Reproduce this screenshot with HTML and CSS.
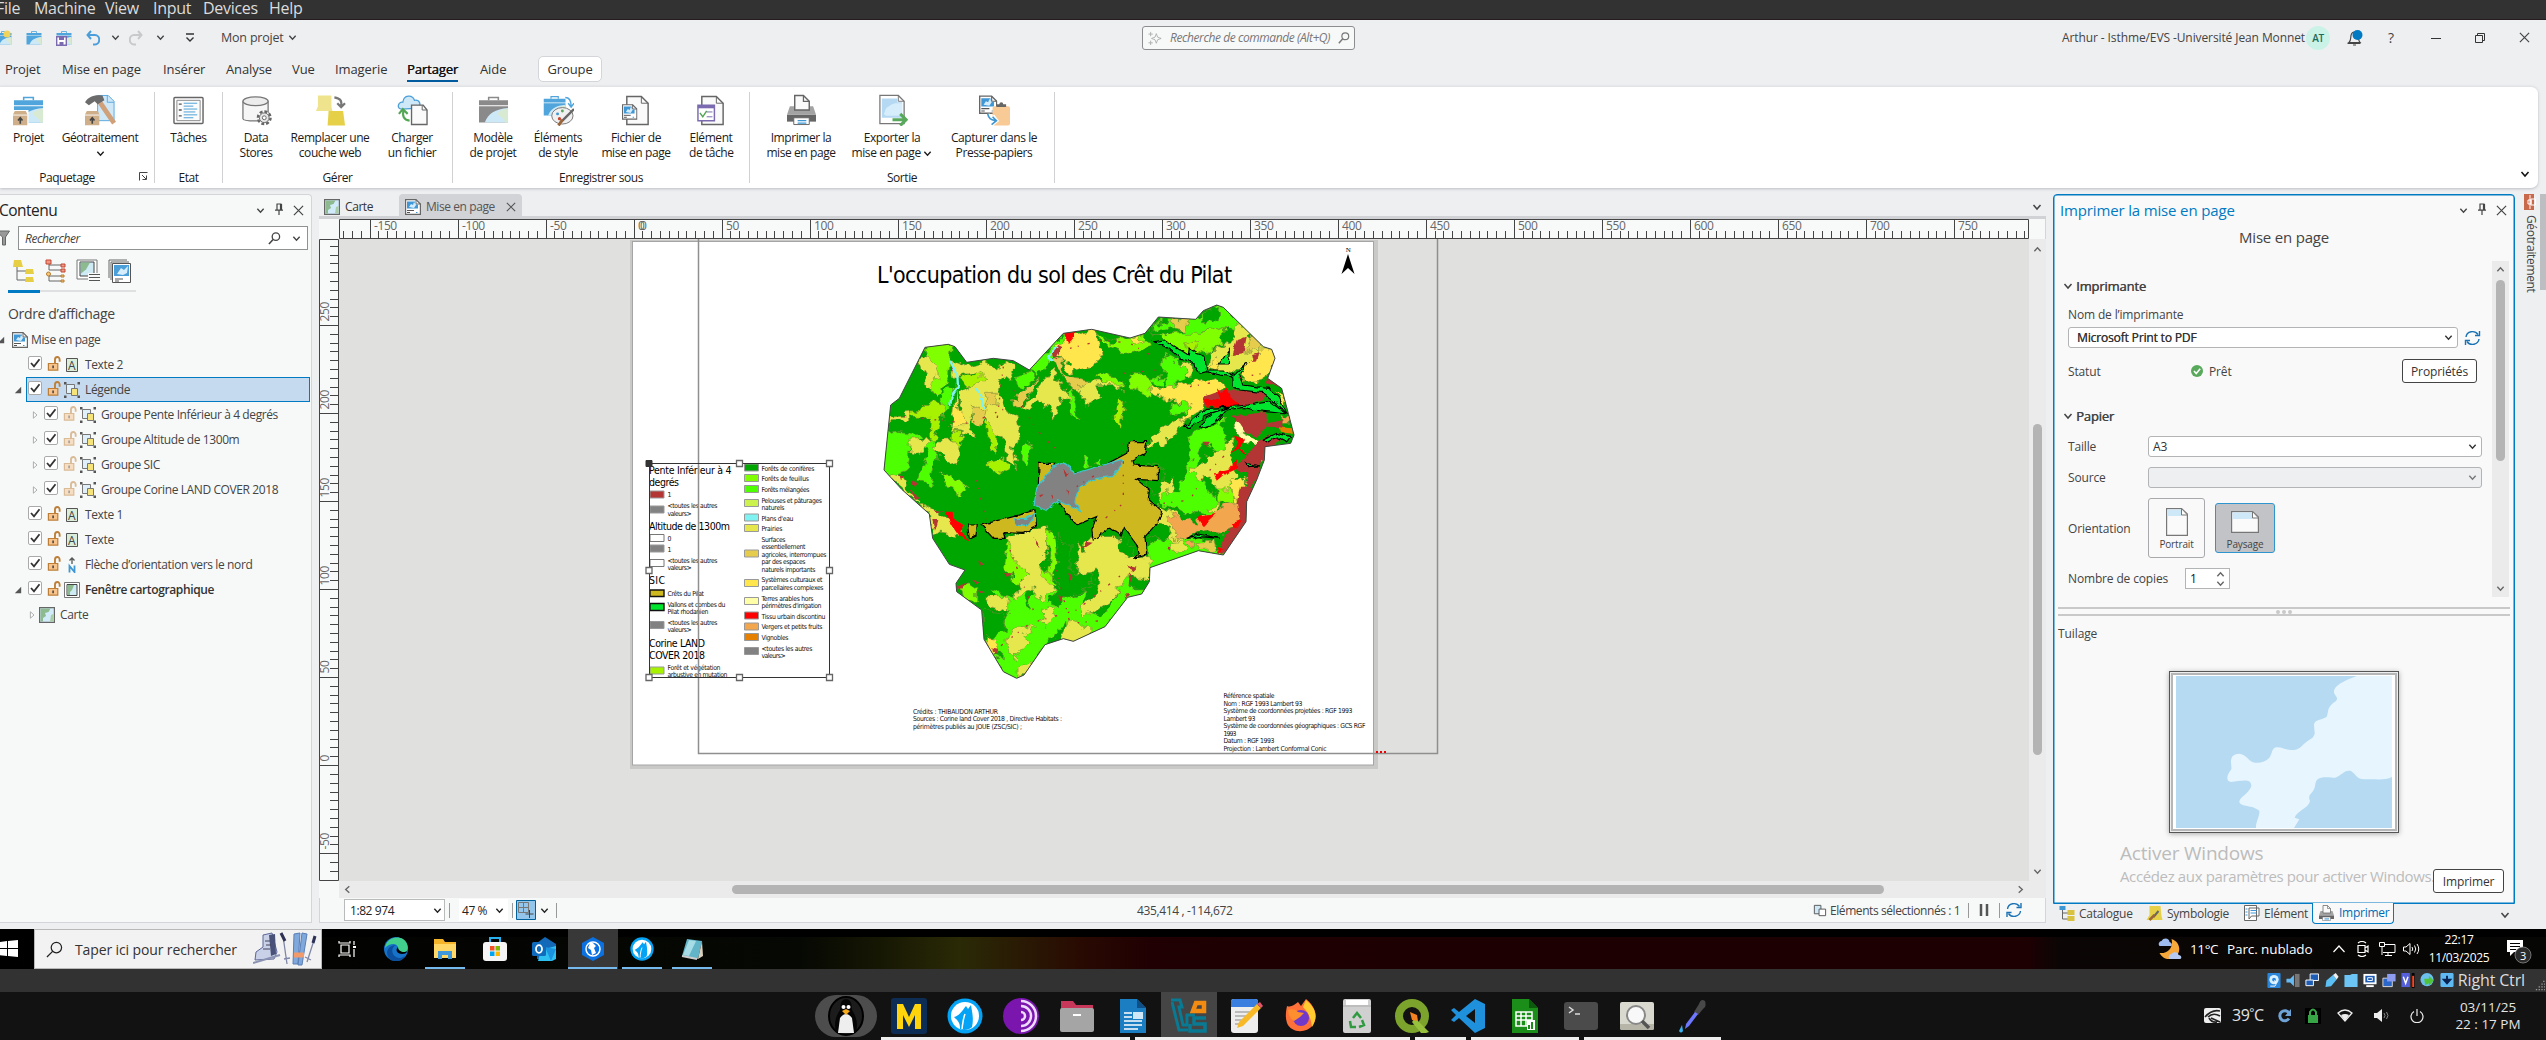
FILE: index.html
```html
<!DOCTYPE html>
<html lang="fr">
<head>
<meta charset="utf-8">
<title>Mon projet</title>
<link rel="stylesheet" href="styles.css">
</head>
<body>
<svg width="0" height="0" class="defs">
  <symbol id="chev" viewBox="0 0 10 10"><path d="M1.5 3l3.500 4 3.500-4" fill="none" stroke="currentColor" stroke-width="1.500"/></symbol>
  <symbol id="up" viewBox="0 0 10 10"><path d="M1.500 7L5 3l3.500 4" fill="none" stroke="currentColor" stroke-width="1.500"/></symbol>
  <symbol id="x" viewBox="0 0 12 12"><path d="M1 1l10 10M11 1L1 11" fill="none" stroke="currentColor" stroke-width="1.300"/></symbol>
  <symbol id="pin" viewBox="0 0 10 12"><path d="M2.500 1h5M3 1v6M6.500 1v6M7.500 1v6M1 7.200h8M5 7v5" fill="none" stroke="#444" stroke-width="1.200"/></symbol>
  <symbol id="mag" viewBox="0 0 14 14"><circle cx="8.500" cy="5" r="4" fill="none" stroke="currentColor" stroke-width="1.400"/><path d="M5.500 8L1 13" stroke="currentColor" stroke-width="1.700"/></symbol>
  <symbol id="layout" viewBox="0 0 16 16"><path d="M.6.600H11L15.400 5v10.400H.6z" fill="#fff" stroke="#666" stroke-width="1.200"/><path d="M11 .600V5h4.400" fill="none" stroke="#666"/><path d="M2 2.500h8v3h3v4H2z" fill="#3f97d6"/><path d="M4 8l2-3 2 1 1-3 2 3-2 3z" fill="#d4ecfb"/><path d="M2 11.500h7M2 13.500h3" stroke="#555"/><path d="M11 13.500h1.500" stroke="#3f97d6"/></symbol>
  <symbol id="map" viewBox="0 0 16 16"><path d="M.6.600h14.800v14.800H.6z" fill="#d2ebfa" stroke="#666" stroke-width="1.200"/><path d="M1.500 1.500h10L9.500 5 6 6l1 3-3 2v3.500H1.500z" fill="#8dba8f"/><path d="M12 8l2.500-1v7.500H11z" fill="#a9cda5"/></symbol>
  <symbol id="frame" viewBox="0 0 16 16"><path d="M.5.500h15v15H.5z" fill="#fff" stroke="#777"/><path d="M3 2.500h10v11H3z" fill="#cdeaf5" stroke="#444"/><path d="M3.500 3H10L8 8l-2 2v3H3.500z" fill="#8dba8f"/></symbol>
  <symbol id="lock" viewBox="0 0 15 16"><path d="M1 8h10v7H1z" fill="#f8c48c" stroke="#bd7f38" stroke-width="1.300"/><path d="M8 8V4a2.500 3 0 0 1 5 0v2" fill="none" stroke="#bd7f38" stroke-width="2"/><path d="M6 10v3" stroke="#333" stroke-width="1.500"/></symbol>
  <symbol id="grp" viewBox="0 0 16 16"><path d="M2.500 2.500h8v9h-8z" fill="#dff0fb" stroke="#777"/><path d="M7.500 6.500h6v7h-6z" fill="#f6e47b" stroke="#777"/><path d="M0 0h2.500v2.500H0zM13.500 0H16v2.500h-2.500zM0 13.500h2.500V16H0zM13.500 13.500H16V16h-2.500z" fill="#555"/></symbol>
  <symbol id="txt" viewBox="0 0 16 16"><path d="M2.500 1.500h11v13h-11z" fill="#d9edd9" stroke="#555"/><text x="4" y="12.500" font-size="12" font-family="Open Sans" fill="#444">A</text></symbol>
  <symbol id="tri" viewBox="0 0 10 10"><path d="M9 1v8H1z" fill="#555"/></symbol>
  <symbol id="trir" viewBox="0 0 10 10"><path d="M3 1l4.500 4L3 9z" fill="#fff" stroke="#999"/></symbol>
  <symbol id="chk" viewBox="0 0 14 14"><rect x=".5" y=".5" width="13" height="13" rx="1.500" fill="#fff" stroke="#aaa"/><path d="M3 7l3 3.300 5.500-7" fill="none" stroke="#333" stroke-width="1.800"/></symbol>
  <symbol id="case" viewBox="0 0 32 32"><path d="M11 6V3h10v3" fill="none" stroke="currentColor" stroke-width="1.600"/><path d="M1 6h30v5H1zM1 12h30v17H1z" fill="currentColor"/><path d="M7 29C10 20 18 15 31 14v15z" fill="#cde8f7"/><path d="M20 20c3-4 7-5 11-5v14h-3c-1-5-5-6-8-9z" fill="#d9ead3"/></symbol>
  <symbol id="box" viewBox="0 0 16 16"><path d="M2 0h12l2 4v12H0V4z" fill="#cfae8a"/><path d="M0 4.500h16" stroke="#fff"/><path d="M8 14V8M5.500 10.500L8 7.500l2.500 3" stroke="#444" stroke-width="1.800" fill="none"/></symbol>
  <symbol id="refresh" viewBox="0 0 16 16"><path d="M1.500 7a6.500 6 0 0 1 12-2.500M14.500 9a6.500 6 0 0 1-12 2.500" fill="none" stroke="#1a72b5" stroke-width="1.400"/><path d="M15 1v4.500h-4.500M1 15v-4.500h4.500" fill="none" stroke="#1a72b5" stroke-width="1.400"/></symbol>
  <symbol id="wolf" viewBox="0 0 36 36"><circle cx="18" cy="18" r="17.500" fill="#05a3f5"/><circle cx="18" cy="18" r="14" fill="#fff"/><path d="M13 31c0-7-2-8-6-12 5-1 8-6 12-11l2 3 3-4c1 7 3 13 1 22-3 3-8 4-12 2z" fill="#05a3f5"/><path d="M15 31c1-8 1-10 3-15" stroke="#fff" stroke-width="1.500" fill="none"/></symbol>
  <symbol id="printer" viewBox="0 0 32 32"><path d="M4 12h24l3 9H1z" fill="#a3a3a3"/><path d="M9 1h9l6 6v9H9z" fill="#fafafa" stroke="#666" stroke-width="1.500"/><path d="M18 1v6h6" fill="none" stroke="#666" stroke-width="1.300"/><path d="M1 21h30v7H1z" fill="#666"/><path d="M8 24h16v7H8z" fill="#fff" stroke="#666"/><path d="M12 27h9M12 29.500h9" stroke="#3e97d3" stroke-width="1.200"/></symbol>
</svg>

<nav class="vm-menu"><span>File</span><span>Machine</span><span>View</span><span>Input</span><span>Devices</span><span>Help</span></nav>

<header class="titlebar">
  <div class="quick">
    <svg viewBox="0 0 16 16" width="16" height="16" color="#4fa5dc"><use href="#case"/><circle cx="11" cy="4" r="3.500" fill="#f1d45b"/></svg>
    <svg viewBox="0 0 16 16" width="16" height="16" color="#4fa5dc"><use href="#case"/></svg>
    <svg viewBox="0 0 16 16" width="16" height="16" color="#4fa5dc"><use href="#case"/><path d="M.7 6.700h9.600v8.600H.7z" fill="#fff" stroke="#7b6ab0" stroke-width="1.400"/><path d="M3 7h5v3H3zM3.500 12h4v3h-4z" fill="#7b6ab0"/></svg>
    <svg viewBox="0 0 14 16" width="14" height="16"><path d="M5 1L1.500 5 5 9M1.500 5H9a4 4.500 0 0 1 0 9.500H7" fill="none" stroke="#4a9fdb" stroke-width="2"/></svg>
    <svg width="9" height="9" color="#444"><use href="#chev"/></svg>
    <svg viewBox="0 0 14 16" width="14" height="16"><path d="M9 1l3.500 4L9 9M12.500 5H5a4 4.500 0 0 0 0 9.500h2" fill="none" stroke="#c8c9cb" stroke-width="2"/></svg>
    <svg width="9" height="9" color="#444"><use href="#chev"/></svg>
    <svg viewBox="0 0 10 10" width="10" height="10"><path d="M1 1h8M1.500 4.500L5 8l3.500-3.500" fill="none" stroke="#333" stroke-width="1.400"/></svg>
  </div>
  <div class="proj">Mon projet <svg width="9" height="9"><use href="#chev"/></svg></div>
  <div class="cmd"><svg viewBox="0 0 16 16" width="14" height="16" class="spark"><path d="M9.500 3l1.500 4 4 1.500-4 1.500-1.500 4L8 10 4 8.500 8 7zM3 1v5M.5 3.500h5M3 11v5M.5 13.500h5" fill="none" stroke="#aaa"/></svg><i>Recherche de commande (Alt+Q)</i><svg width="12" height="12"><use href="#mag"/></svg></div>
  <div class="acct"><span class="who">Arthur - Isthme/EVS -Université Jean Monnet</span><b class="av">AT</b>
    <svg class="bell" viewBox="0 0 16 16" width="16" height="16"><path d="M2 12.500c2-1.500 1.500-4 2-7C4.500 3 6 2 7.500 2S11 3 11.500 6c0 3 0 5 1.500 6.500zM.5 13.500h13M6 15h3" fill="none" stroke="#444" stroke-width="1.200"/><circle cx="10.500" cy="5" r="5" fill="#007ac2"/></svg>
    <span class="q">?</span>
    <svg class="wmin" viewBox="0 0 10 10" width="10" height="10"><path d="M0 5.500h10" stroke="#333"/></svg>
    <svg class="wmax" viewBox="0 0 10 10" width="10" height="10"><path d="M.5 2.500h7v7h-7zM2.500 2.500v-2h7v7h-2" fill="none" stroke="#333"/></svg>
    <svg class="wx" width="11" height="11"><use href="#x"/></svg>
  </div>
</header>

<nav class="tabs"><span>Projet</span><span>Mise en page</span><span>Insérer</span><span>Analyse</span><span>Vue</span><span>Imagerie</span><span><b>Partager</b></span><span>Aide</span><em>Groupe</em></nav>

<section class="ribbon">
  <div class="rg g1">
    <div class="btns">
      <div class="rb"><svg viewBox="0 0 32 32" color="#4fa5dc"><use href="#case"/><path d="M0 16h16v16H0z" fill="#fff"/><use href="#box" x="0" y="17" width="15" height="15"/></svg>Projet</div>
      <div class="rb"><svg viewBox="0 0 32 32"><path d="M13 1h11l6 6v20H13z" fill="#cfe8f8" stroke="#5ba9df"/><path d="M23 1v7h7" fill="none" stroke="#5ba9df"/><path d="M13 9l4-3 15 22-4 3z" fill="#cfa07a"/><path d="M0 8C4 2 9 0 18 1l2 5-7 4-3-3-6 4z" fill="#6b6b6b"/><use href="#box" x="0" y="17" width="15" height="15"/></svg>Géotraitement<svg class="c" viewBox="0 0 10 10"><use href="#chev"/></svg></div>
    </div><div class="lab">Paquetage<svg class="launch" viewBox="0 0 9 9"><path d="M.5 8.500v-8h8M3 3l4 4M7.500 3.500v4h-4" fill="none" stroke="#444"/></svg></div>
  </div>
  <div class="rg g2"><div class="btns">
      <div class="rb"><svg viewBox="0 0 32 32"><rect x="1" y="3" width="30" height="27" rx="1" fill="#fff" stroke="#666" stroke-width="1.500"/><path d="M4 6h24v21H4z" fill="#fbfbfb" stroke="#888"/><path d="M6 10h3M6 16h3M6 22h3" stroke="#555" stroke-width="1.300"/><path d="M11 9h14M11 12h10M11 15h14M11 18h12M11 21h14M11 24h10" stroke="#4a9fd8"/></svg>Tâches</div>
  </div><div class="lab">Etat</div></div>
  <div class="rg g3"><div class="btns">
      <div class="rb"><svg viewBox="0 0 32 32"><path d="M2 7v18c0 3 26 3 26 0V7" fill="#f6f6f6" stroke="#777" stroke-width="1.300"/><ellipse cx="15" cy="7" rx="13" ry="4.500" fill="#ececec" stroke="#777" stroke-width="1.300"/><circle cx="24" cy="24" r="6.500" fill="#fff" stroke="#666" stroke-width="2.500" stroke-dasharray="3 2"/><circle cx="24" cy="24" r="5" fill="#e6e6e6" stroke="#666"/><circle cx="24" cy="24" r="2" fill="#fff" stroke="#666"/></svg>Data<br>Stores</div>
      <div class="rb"><svg viewBox="0 0 32 32"><path d="M3 1h14v12l1 4H1l2-5z" fill="#efe38e"/><path d="M14 17h15l2 15H13z" fill="#e5d048"/><path d="M20 3c6 1 8 3 7 9M23 9l4 4 4-4" fill="none" stroke="#777" stroke-width="2.300"/></svg>Remplacer une<br>couche web</div>
      <div class="rb"><svg viewBox="0 0 32 32"><path d="M5 15C-1 15 1 7 6 8c1-8 10-8 12-2 6-1 7 5 4 8z" fill="#cfe8f8" stroke="#4a9fd8" stroke-width="1.300"/><path d="M15 11h12l4 5v15H15z" fill="#fafafa" stroke="#666" stroke-width="1.400"/><path d="M26 11v5h5" fill="none" stroke="#666"/><path d="M13 27C7 26 5 22 7 16M2 20l4-5 5 5" fill="none" stroke="#53a653" stroke-width="2.200"/></svg>Charger<br>un fichier</div>
  </div><div class="lab">Gérer</div></div>
  <div class="rg g4"><div class="btns">
      <div class="rb"><svg viewBox="0 0 32 32" color="#8a8a8a"><use href="#case"/></svg>Modèle<br>de projet</div>
      <div class="rb"><svg viewBox="0 0 32 32" color="#4fa5dc"><g transform="scale(.75)"><use href="#case" width="32" height="32"/></g><path d="M23 3c5 0 6 4 6 9M26 9l3 4 3-4" fill="none" stroke="#4fa5dc" stroke-width="1.500"/><ellipse cx="20" cy="22" rx="11" ry="8.500" fill="#f0f0f0" stroke="#777"/><circle cx="15" cy="20" r="1.500" fill="#3e97d3"/><circle cx="20" cy="17" r="1.500" fill="#59a95c"/><circle cx="17" cy="25" r="1.700" fill="#c5472f"/><path d="M32 15L19 28" stroke="#666" stroke-width="2.500"/><path d="M20 26l-4 6" stroke="#9b653a" stroke-width="3"/></svg>Éléments<br>de style</div>
      <div class="rb"><svg viewBox="0 0 32 32"><path d="M6 2h15l7 7v22H6z" fill="#fafafa" stroke="#666" stroke-width="1.500"/><path d="M21 2v7h7" fill="none" stroke="#666"/><use href="#layout" x="1" y="9" width="16" height="18"/></svg>Fichier de<br>mise en page</div>
      <div class="rb"><svg viewBox="0 0 32 32"><path d="M6 2h15l7 7v22H6z" fill="#fafafa" stroke="#666" stroke-width="1.500"/><path d="M21 2v7h7" fill="none" stroke="#666"/><path d="M2 11h17v16H2z" fill="#fff" stroke="#7b6ab0" stroke-width="1.500"/><path d="M2 13h17" stroke="#7b6ab0" stroke-width="2.500"/><path d="M4 19l3 4 4-6" fill="none" stroke="#53a653" stroke-width="1.500"/><path d="M11 18h6M11 23h6" stroke="#7b6ab0"/></svg>Elément<br>de tâche</div>
  </div><div class="lab">Enregistrer sous</div></div>
  <div class="rg g5"><div class="btns">
      <div class="rb"><svg><use href="#printer"/></svg>Imprimer la<br>mise en page</div>
      <div class="rb"><svg viewBox="0 0 32 32"><path d="M3 1h19l6 6v23H3z" fill="#fff" stroke="#777" stroke-width="1.300"/><path d="M5 4h16v4h5v16H5z" fill="#b5d9f2"/><path d="M7 20c2-3 1-5 4-7s5-4 10-4h5v13H9z" fill="#d6edfb"/><path d="M22 1v6h6" fill="none" stroke="#777"/><path d="M16 26h13M24 20l6 6-6 6" fill="none" stroke="#59a95c" stroke-width="3.200"/></svg>Exporter la<br><span>mise en page <svg class="c in" viewBox="0 0 10 10"><use href="#chev"/></svg></span></div>
      <div class="rb"><svg viewBox="0 0 32 32"><use href="#layout" x="0" y="0" width="19" height="21"/><rect x="14" y="12" width="18" height="20" rx="2" fill="#f8ca95"/><path d="M18 13h10v-3h-3a2 2 0 0 0-4 0h-3z" fill="#666"/><path d="M9 20c1 5 3 6 8 7M14 22l4 5-5 4" fill="none" stroke="#fff" stroke-width="4"/><path d="M9 20c1 5 3 6 8 7M14 23l4 4-5 4" fill="none" stroke="#3e97d3" stroke-width="1.700"/></svg>Capturer dans le<br>Presse-papiers</div>
  </div><div class="lab">Sortie</div></div>
  <svg class="collapse" width="10" height="10"><use href="#chev"/></svg>
</section>

<main>
  <aside class="contents">
    <div class="ph"><h2>Contenu</h2><svg width="9" height="9"><use href="#chev"/></svg><svg width="10" height="12"><use href="#pin"/></svg><svg width="11" height="11"><use href="#x"/></svg></div>
    <div class="find"><svg viewBox="0 0 11 16" width="11" height="16"><path d="M-4 1H9.500L5.500 7v8h-3V7z" fill="#999" stroke="#666"/></svg><div><i>Rechercher</i><svg width="13" height="13"><use href="#mag"/></svg><svg width="9" height="9"><use href="#chev"/></svg></div></div>
    <div class="views">
      <svg viewBox="0 0 24 24"><path d="M5 8v13h10M5 12h10" fill="none" stroke="#666"/><path d="M2 1h7l2 7H1zM14 10h7l1 5h-9zM14 18h7l1 5h-9z" fill="#e7cf45"/></svg>
      <svg viewBox="0 0 24 24"><path d="M5 5v6h12M5 15v7h12M5 6h12M5 17h12" fill="none" stroke="#666"/><path d="M2 1h5v4H2zM17 5h4v3h-4zM17 10h4v3h-4z" fill="#e98" stroke="#c5472f"/><circle cx="4.500" cy="15" r="2" fill="#f6c979" stroke="#b97a2d"/><path d="M17 16h3v2h-3zM17 21h3v2h-3z" fill="#f6c979" stroke="#b97a2d"/></svg>
      <svg viewBox="0 0 24 24"><path d="M1 1h20v19H1z" fill="#fff" stroke="#777"/><path d="M4 3h14v14H4z" fill="#cdeaf5" stroke="#444"/><path d="M4.500 3.500H14l-4 7-5 4z" fill="#8dba8f"/><path d="M12 14h12v9H12z" fill="#f8f9f9"/><path d="M13 15.500h11M13 18.500h11M13 21.500h11" stroke="#555"/></svg>
      <svg viewBox="0 0 24 24"><path d="M1 19V1h18M3 21V3h18" fill="none" stroke="#666"/><path d="M4.500 4.500h18v19h-18z" fill="#fff" stroke="#555"/><path d="M6 6h15v11H6z" fill="#4a9fd8"/><path d="M9 15l4-6 3 2 4-4-1 7-4 2z" fill="#d6edfb"/><path d="M7 20h8M7 22h4" stroke="#555"/></svg>
    </div>
    <div class="bar"><b></b></div>
    <h3>Ordre d’affichage</h3>
    <div class="tree">
      <div class="row l0"><svg class="ex"><use href="#tri"/></svg><svg class="ic"><use href="#layout"/></svg>Mise en page</div>
      <div class="row l1"><s></s><svg class="ck"><use href="#chk"/></svg><svg class="lk"><use href="#lock"/></svg><svg class="ic"><use href="#txt"/></svg>Texte 2</div>
      <div class="row l1 sel"><s><svg class="ex"><use href="#tri"/></svg></s><svg class="ck"><use href="#chk"/></svg><svg class="lk"><use href="#lock"/></svg><svg class="ic"><use href="#grp"/></svg>Légende</div>
      <div class="row l2"><s><svg class="ex"><use href="#trir"/></svg></s><svg class="ck"><use href="#chk"/></svg><svg class="lk dim"><use href="#lock"/></svg><svg class="ic"><use href="#grp"/></svg>Groupe Pente Inférieur à 4 degrés</div>
      <div class="row l2"><s><svg class="ex"><use href="#trir"/></svg></s><svg class="ck"><use href="#chk"/></svg><svg class="lk dim"><use href="#lock"/></svg><svg class="ic"><use href="#grp"/></svg>Groupe Altitude de 1300m</div>
      <div class="row l2"><s><svg class="ex"><use href="#trir"/></svg></s><svg class="ck"><use href="#chk"/></svg><svg class="lk dim"><use href="#lock"/></svg><svg class="ic"><use href="#grp"/></svg>Groupe SIC</div>
      <div class="row l2"><s><svg class="ex"><use href="#trir"/></svg></s><svg class="ck"><use href="#chk"/></svg><svg class="lk dim"><use href="#lock"/></svg><svg class="ic"><use href="#grp"/></svg>Groupe Corine LAND COVER 2018</div>
      <div class="row l1"><s></s><svg class="ck"><use href="#chk"/></svg><svg class="lk"><use href="#lock"/></svg><svg class="ic"><use href="#txt"/></svg>Texte 1</div>
      <div class="row l1"><s></s><svg class="ck"><use href="#chk"/></svg><svg class="lk"><use href="#lock"/></svg><svg class="ic"><use href="#txt"/></svg>Texte</div>
      <div class="row l1"><s></s><svg class="ck"><use href="#chk"/></svg><svg class="lk"><use href="#lock"/></svg><svg class="ic" viewBox="0 0 16 16"><path d="M8 7V1M5.500 3.500L8 1l2.500 2.500" fill="none" stroke="#555" stroke-width="1.300"/><path d="M5.500 15.500V9l5 6V8.500" fill="none" stroke="#3e97d3" stroke-width="1.800"/></svg>Flèche d’orientation vers le nord</div>
      <div class="row l1 strong"><s><svg class="ex"><use href="#tri"/></svg></s><svg class="ck"><use href="#chk"/></svg><svg class="lk"><use href="#lock"/></svg><svg class="ic"><use href="#frame"/></svg>Fenêtre cartographique</div>
      <div class="row l3"><svg class="ex"><use href="#trir"/></svg><svg class="ic"><use href="#map"/></svg>Carte</div>
    </div>
  </aside>

  <section class="view">
    <div class="vtabs"><div class="vt"><svg width="16" height="16"><use href="#map"/></svg>Carte</div><div class="vt on"><svg width="16" height="16"><use href="#layout"/></svg>Mise en page<svg class="cx" width="10" height="10"><use href="#x"/></svg></div><svg class="more" width="10" height="10"><use href="#chev"/></svg></div>
    <div class="body">
      <svg class="rh" viewBox="339 219 1690 20" id="rh"></svg>
      <svg class="rv" viewBox="319 239 20 642" id="rv"></svg>
      <svg class="canvas" viewBox="339 239 1690 642">
        <rect x="339" y="239" width="1690" height="642" fill="#e0e0de"/>
        <rect x="630" y="240" width="748" height="529" fill="#c9c9c8"/>
        <rect x="632.500" y="241.500" width="741" height="523.500" fill="#fff" stroke="#a5a5a5"/>
        <svg x="870" y="290" width="440" height="400" viewBox="0 0 1320 1200">
          <defs>
            <path id="edge" d="M165 172L235 163L255 170L290 217L370 205L430 212L478 240L580 130L665 118L780 144L825 130L865 81L977 88L1000 62L1040 45L1060 52L1180 170L1205 178L1215 205L1193 265L1235 295L1255 370L1272 435L1262 460L1185 470L1183 510L1160 570L1130 635L1128 695L1060 795L985 782L840 833L838 875L815 912L773 922L705 1010L610 1054L580 1046L525 1064L462 1155L440 1165L400 1145L342 1048L335 960L260 905L258 880L285 840L238 823L188 745L178 672L95 598L42 540L62 345L88 325Z"/>
            <clipPath id="mc"><use href="#edge"/></clipPath>
            <filter id="rough" x="-5%" y="-5%" width="110%" height="110%" color-interpolation-filters="sRGB"><feTurbulence type="fractalNoise" baseFrequency=".03" numOctaves="3" seed="4"/><feDisplacementMap in="SourceGraphic" scale="42" xChannelSelector="R" yChannelSelector="G"/></filter>
            <filter id="rough2" x="-5%" y="-5%" width="110%" height="110%" color-interpolation-filters="sRGB"><feTurbulence type="fractalNoise" baseFrequency=".06" numOctaves="1" seed="9"/><feDisplacementMap in="SourceGraphic" scale="15" xChannelSelector="R" yChannelSelector="G"/></filter>
          </defs>
          <g clip-path="url(#mc)">
            <rect width="1320" height="1200" fill="#00a600"/>
            <g filter="url(#rough)" stroke="#7d8a3c" stroke-width="1.800">
              <g fill="#4dff00">
                <path d="M30 435L90 425L145 432L120 470L110 545L60 560L20 540Z"/>
                <path d="M190 440L200 500L180 585L150 570L165 520L180 480L150 470Z"/>
                <path d="M435 262L480 250L495 265L460 295L440 285Z"/>
                <path d="M475 245L590 120L555 195L530 225L500 255Z"/>
                <path d="M860 100L980 85L1060 40L1140 130L1060 110L990 130L920 150L850 130Z"/>
                <path d="M880 190L930 210L950 260L900 300L880 260Z"/><path d="M840 270L880 265L880 290L840 285Z"/>
                <path d="M860 590L930 600L960 500L950 440L1060 390L1070 470L1050 490L1000 450L970 540L1010 580L1050 640L1040 680L950 665L870 640Z"/>
                <path d="M905 340L965 335L940 370L900 370Z"/>
                <path d="M835 770L870 740L1000 740L1070 800L840 850Z"/>
                <path d="M360 900L420 920L460 900L480 950L510 880L560 900L580 930L650 900L640 960L700 980L780 820L780 900L840 900L840 930L700 1020L600 1060L590 990L520 1080L440 1190L320 1060L400 1010L420 960L380 940Z"/>
                <path d="M600 290L615 310L630 390L600 370Z"/><path d="M460 460L490 465L475 530L450 510Z"/>
                <path d="M645 760L670 750L675 820L650 830Z"/><path d="M640 520L655 500L665 530ZM670 515L690 500L700 525Z"/>
                <path d="M290 300L330 290L320 330L290 320ZM210 310L250 280L240 350L220 370Z"/>
              </g>
              <g fill="#80ff00">
                <path d="M165 165L245 160L240 220L235 260L200 320L180 300L200 230L170 200Z"/>
                <path d="M205 545L240 550L290 595L285 615L240 595Z"/>
                <path d="M415 750L460 790L470 870L440 880L400 830Z"/><path d="M520 710L550 730L560 850L530 860L540 790Z"/>
                <path d="M880 130L990 130L1060 110L1060 160L1010 180L970 200L900 180Z"/>
                <path d="M690 245L765 270L760 300L680 265Z"/><path d="M270 890L320 880L320 940L280 920Z"/>
                <path d="M680 140L740 150L820 130L850 170L780 190L710 170Z"/><path d="M780 255L830 245L850 320L780 290Z"/>
                <path d="M1090 640L1080 580L1040 590L1050 640Z"/><path d="M705 770L740 780L720 820Z"/>
                <path d="M510 840L540 850L550 880L510 880Z"/>
              </g>
              <g fill="#a6f200">
                <path d="M270 260L350 240L340 290L290 290Z"/><path d="M755 320L765 340L755 415L735 385L740 345Z"/>
                <path d="M110 385L190 330L225 350L205 420L180 465L185 385Z"/>
                <path d="M360 515L400 500L420 530L385 560L360 550Z"/><path d="M345 390L380 420L380 490L350 450Z"/>
                <path d="M245 420L275 430L265 520L240 500Z"/><path d="M940 170L985 150L970 190Z"/>
              </g>
              <g fill="#e6e64d">
                <path d="M245 205L290 225L340 215L390 240L400 215L440 230L425 260L395 265L385 300L410 360L440 380L450 430L430 480L440 535L410 500L400 440L370 420L340 380L310 360L300 410L320 450L290 430L240 420L280 350L270 310L345 270L310 245L250 260Z"/>
                <path d="M160 200L195 210L205 250L185 310L165 260L150 220Z"/>
                <path d="M200 450L260 450L270 510L240 520L190 480Z"/><path d="M120 445L170 440L170 470L120 500Z"/>
                <path d="M450 360L550 240L575 290L610 330L570 330L550 395L540 350L500 330L490 350Z"/>
                <path d="M600 280L700 275L770 290L680 290L690 320L640 350L630 300Z"/>
                <path d="M60 375L130 370L120 385L60 390Z"/><path d="M40 545L100 560L110 590L150 640L230 680L280 710L270 740L190 730L180 670Z"/>
                <path d="M410 740L530 710L530 800L510 830L540 890L560 900L510 930L490 890L430 930L450 870L470 850L430 800Z"/>
                <path d="M620 760L640 780L660 740L730 740L790 800L840 800L840 870L770 860L740 900L720 930L650 980L630 960L680 910L680 840L620 850Z"/>
                <path d="M600 990L625 1000L660 1030L650 1055L590 1070L570 1050Z"/><path d="M350 920L420 920L415 960L370 950Z"/>
                <path d="M420 1010L500 1015L460 1040L480 1060L430 1105L410 1050Z"/><path d="M520 960L560 950L530 1010L510 990Z"/><path d="M450 1130L480 1115L490 1150L450 1160Z"/>
                <path d="M830 470L870 420L930 385L950 390L900 450L850 470Z"/>
                <path d="M960 540L1060 470L1090 440L1080 520L1100 560L1070 600L1040 600L1020 560L980 570Z"/>
                <path d="M1010 220L1020 180L1080 160L1100 100L1120 120L1190 180L1130 220L1100 250L1040 240Z"/>
                <path d="M860 640L930 680L950 780L910 750L890 710L850 700Z"/><path d="M860 600L920 560L905 600L870 630Z"/>
                <path d="M930 230L970 220L960 260Z"/><path d="M900 760L940 750L950 780L910 785Z"/><path d="M1010 655L1050 640L1040 670Z"/>
              </g>
              <g fill="#ffe64d">
                <path d="M580 140L665 120L690 170L700 195L665 210L660 235L600 250L580 200L545 195Z"/>
                <path d="M830 300L940 285L1030 265L1070 290L1010 330L990 370L930 395L960 340L890 330Z"/>
                <path d="M1120 230L1170 180L1230 180L1190 270L1120 280Z"/>
                <path d="M260 300L275 380L290 410L240 410L255 360Z"/><path d="M340 1040L390 1060L380 1095L350 1080Z"/>
                <path d="M1010 230L1050 200L1040 240Z"/><path d="M1080 580L1120 560L1120 630L1090 640Z"/>
                <path d="M1160 500L1185 490L1175 520Z"/><path d="M1210 300L1250 330L1240 350Z"/>
                <path d="M790 140L830 150L790 165Z"/>
              </g>
              <g fill="#e6cc4d">
                <path d="M550 205L580 200L575 255L655 270L640 290L590 290L570 250Z"/>
                <path d="M430 330L510 260L480 310L440 355Z"/><path d="M350 310L385 310L380 350L340 350Z"/>
                <path d="M310 340L345 360L335 410L310 390Z"/><path d="M905 90L950 95L955 120L910 110Z"/>
                <path d="M980 755L1030 750L1040 780L990 785Z"/><path d="M1150 120L1180 170L1130 190Z"/>
              </g>
              <g fill="#f2a64d"><path d="M890 670L980 700L1040 660L1090 630L1130 640L1120 700L1060 730L1000 720L920 750Z"/><path d="M950 755L975 750L965 785Z"/><path d="M1240 375L1265 380L1265 400L1235 400Z"/><path d="M1120 570L1150 560L1140 590Z"/></g>
              <g fill="#00a600"><path d="M1000 70L1050 55L1040 90L1000 110Z"/><path d="M825 125L900 110L960 120L870 135Z"/><path d="M700 140L745 145L740 160L710 160Z"/><path d="M565 730L600 760L600 840L660 850L670 890L610 910L570 950L530 940L570 900L550 860Z"/><path d="M340 960L400 970L400 1020L360 1050L340 1030Z"/><path d="M740 740L790 770L790 800L750 790Z"/><path d="M835 740L870 740L860 765Z"/><path d="M830 520L885 530L880 600L850 630L830 590Z"/><path d="M370 1090L400 1090L400 1110Z"/></g>
              <path d="M1088 395L1120 385L1120 430L1175 460L1150 475L1100 430Z" fill="#ffffa8"/>
            </g>
            <g filter="url(#rough2)">
              <g fill="#b33635">
                <path d="M1100 150L1130 140L1120 190L1085 195Z"/><path d="M1150 195L1168 190L1160 215L1145 215Z"/><path d="M545 195L565 165L578 172L560 205Z"/>
                <path d="M1055 300L1190 305L1180 330L1120 350L1000 345L1000 320Z"/><path d="M1085 380L1190 365L1190 410L1160 440L1130 430L1110 400Z"/><path d="M1190 400L1240 390L1240 412L1190 410Z"/><path d="M1200 435L1240 445L1200 475L1180 500L1160 570L1130 600L1135 550L1090 540L1170 450Z"/>
                <path d="M1110 590L1150 590L1128 695L1060 795L1040 790L1075 720L1110 690L1100 640Z"/>
                <path d="M240 215L255 240L248 245Z"/><path d="M85 555L105 555L90 570ZM125 570L143 580L130 590ZM115 595L148 620L140 630ZM187 690L205 690L195 725ZM188 660L225 663L200 670ZM325 812L340 820L330 830ZM635 780L650 755L668 758ZM775 825L800 830L785 845ZM780 850L788 860L775 890ZM595 850L608 860L598 885ZM565 915L580 920L570 935ZM260 890L290 878L270 900ZM490 740L512 770L500 765ZM400 850L425 850L410 860ZM1165 560L1180 530L1172 580ZM1190 262L1235 295L1190 280ZM1000 455L1020 455L1010 470ZM765 910L778 910L770 925ZM320 900L345 910L330 912ZM310 870L328 872L320 886ZM360 1075L385 1080L378 1090ZM890 770L905 772L898 782Z"/>
              </g>
              <g fill="#f00"><path d="M582 130L612 125L612 140L598 158Z"/><path d="M1040 290L1055 310L1070 290L1085 325L1115 350L1010 350L1000 325L1050 330Z"/><path d="M1090 435L1125 450L1108 472L1135 495L1115 490L1102 475L1080 492L1105 460ZM1100 505L1105 535L1060 555L1040 572L1032 550L1075 540Z"/><path d="M980 680L1040 672L1020 690L1000 710Z"/><path d="M225 665L248 665L250 685L280 705L275 725L300 755L270 740L250 710Z"/><path d="M1085 700L1115 690L1100 715Z"/><path d="M1040 770L1060 780L1045 790Z"/></g>
              <path d="M1225 412L1268 415L1268 432L1230 425Z" fill="#e68000"/>
              <path d="M240 212L262 255L264 290L245 320L240 350M318 295L335 320L340 358M560 170L535 200L548 212" fill="none" stroke="#80f2f2" stroke-width="7"/>
              <g fill="#cdb81f" stroke="#000" stroke-width="3.500">
                <path d="M507 520L555 520L540 545L520 585L505 590ZM610 550L680 538L770 490L780 455L830 455L825 490L785 510L790 525L865 530L865 572L800 568L838 600L835 630L875 665L865 695L825 740L830 795L790 805L808 790L800 765L760 710L750 735L718 712L670 750L665 720L680 680L620 705L565 640Z"/>
                <path d="M293 705L322 705L318 735L298 745ZM333 705L430 680L495 660L500 710L460 730L400 728L405 745L370 745Z"/>
              </g>
              <g fill="#828282" stroke="#3dc8d0" stroke-width="3.500"><path d="M550 530L580 518L605 535L610 552L700 525L755 508L755 525L725 560L680 565L625 595L615 635L632 665L590 640L565 632L530 662L492 645L500 595Z"/><path d="M433 685L470 685L498 670L470 710L438 705Z"/></g>
              <path d="M580 540L596 550L588 565ZM540 612L548 615L545 628ZM588 598L598 605L596 615ZM508 615L525 612L510 622Z" fill="#b33635"/>
              <g fill="#00e62e" stroke="#000" stroke-width="3.500">
                <path d="M852 155L885 150L955 195L958 175L980 190L1005 200L1010 240L1060 240L1100 262L1050 255L1010 245L990 250L965 215L930 205L895 175Z"/>
                <path d="M1045 225L1078 180L1075 225Z"/><path d="M1130 220L1110 255L1118 285L1195 295L1225 320L1250 370L1225 345L1180 308L1110 300L1090 290L1088 260Z"/>
                <path d="M1135 345L1200 335L1250 372L1150 360L1120 352L1070 360L1035 400L990 415L1010 385L1050 350L1100 348Z"/><path d="M943 412L1010 355L1080 352L1020 370L960 412Z"/>
                <path d="M1180 450L1220 430L1262 440L1250 455L1220 440L1190 458ZM1127 520L1172 528L1135 530ZM950 745L985 732L1050 745L990 740Z"/>
              </g>
            </g>
            <g fill="none" stroke="#b33635" stroke-width="4" stroke-dasharray="5 19 3 27 7 33">
              <path d="M600 175L700 150L780 160L850 200M760 250L860 240M100 380L300 400L420 350M320 570L350 700M420 780L490 960M430 300L500 420L560 480M760 460L760 640L700 690M620 590L700 540M350 1100L480 1000L620 960L760 850M880 640L960 630L1000 560L1080 480M960 290L1180 250M1100 300L1180 340M400 230L380 400M560 840L600 1000L720 990"/>
            </g>
          </g>
          <use href="#edge" fill="none" stroke="#444" stroke-width="3"/>
        </svg>
        <text class="tah" x="877" y="282.500" font-size="23" textLength="355">L'occupation du sol des Crêt du Pilat</text>
        <text x="1348" y="252" text-anchor="middle" font-size="7" font-family="Liberation Serif">N</text>
        <path d="M1348 254l6.500 20-6.500-6-6.500 6z"/>
        <g class="tah sm">
          <text x="913" y="713.500" textLength="85">Crédits : THIBAUDON ARTHUR</text><text x="913" y="721" textLength="149">Sources : Corine land Cover 2018 , Directive Habitats :</text><text x="913" y="728.500" textLength="109">périmètres publiés au JOUE (ZSC/SIC) ;</text>
          <text x="1223.500" y="698" textLength="51">Référence spatiale</text><text x="1223.500" y="705.500" textLength="79">Nom : RGF 1993 Lambert 93</text><text x="1223.500" y="713" textLength="129">Système de coordonnées projetées : RGF 1993</text><text x="1223.500" y="720.500" textLength="32">Lambert 93</text><text x="1223.500" y="728" textLength="142">Système de coordonnées géographiques : GCS RGF</text><text x="1223.500" y="735.500" textLength="13">1993</text><text x="1223.500" y="743" textLength="51">Datum : RGF 1993</text><text x="1223.500" y="750.500" textLength="103">Projection : Lambert Conformal Conic</text>
        </g>
        <g stroke="#999" stroke-width="1">
          <path d="M650 491h14v7h-14z" fill="#b33635"/><path d="M650 506h14v7h-14zM650 545h14v7h-14zM650 621.500h14v7h-14z" fill="#828282"/><path d="M650 534.500h14v7h-14zM650 559.500h14v7h-14z" fill="#fff" stroke="#777"/>
          <path d="M650 590h14v6.500h-14z" fill="#cdb81f" stroke="#111" stroke-width="1.400"/><path d="M650 603.500h14v7h-14z" fill="#00e62e" stroke="#111" stroke-width="1.400"/><path d="M650 667h14v7h-14z" fill="#a6f200"/>
          <path d="M744.500 464h14v7h-14z" fill="#00a600"/><path d="M744.500 474.500h14v7h-14z" fill="#80ff00"/><path d="M744.500 485.500h14v7h-14z" fill="#4dff00"/><path d="M744.500 499.500h14v7h-14z" fill="#ccf24d"/><path d="M744.500 514h14v7h-14z" fill="#80f2f2"/><path d="M744.500 524.500h14v7h-14z" fill="#e6e64d"/><path d="M744.500 550h14v7h-14z" fill="#e6cc4d"/><path d="M744.500 579.500h14v7h-14z" fill="#ffe64d"/><path d="M744.500 597.500h14v7h-14z" fill="#ffffa8"/><path d="M744.500 612h14v7h-14z" fill="#f00"/><path d="M744.500 623h14v7h-14z" fill="#f2a64d"/><path d="M744.500 633.500h14v7h-14z" fill="#e68000"/><path d="M744.500 647.500h14v7h-14z" fill="#828282"/>
        </g>
        <g class="tah hd"><text x="649" y="474" textLength="82.500">Pente Inférieur à 4</text><text x="649" y="486" textLength="30">degrés</text><text x="649" y="529.500" textLength="81">Altitude de 1300m</text><text x="649" y="584" textLength="16">SIC</text><text x="649" y="646.500" textLength="56">Corine LAND</text><text x="649" y="658.500" textLength="56">COVER 2018</text></g>
        <g class="tah sm">
          <text x="667.500" y="497">1</text><text x="667.500" y="508" textLength="50">&lt;toutes les autres</text><text x="667.500" y="515.500" textLength="24">valeurs&gt;</text><text x="667.500" y="541">0</text><text x="667.500" y="551.500">1</text><text x="667.500" y="562.500" textLength="50">&lt;toutes les autres</text><text x="667.500" y="570" textLength="24">valeurs&gt;</text><text x="667.500" y="595.500" textLength="36.500">Crêts du Pilat</text><text x="667.500" y="606.500" textLength="58">Vallons et combes du</text><text x="667.500" y="614" textLength="41">Pilat rhodanien</text><text x="667.500" y="624.500" textLength="50">&lt;toutes les autres</text><text x="667.500" y="631.500" textLength="24">valeurs&gt;</text><text x="667.500" y="669.500" textLength="53">Forêt et végétation</text><text x="667.500" y="677" textLength="60">arbustive en mutation</text>
          <text x="761.500" y="470.500" textLength="53">Forêts de conifères</text><text x="761.500" y="481" textLength="47.500">Forêts de feuillus</text><text x="761.500" y="491.500" textLength="48">Forêts mélangées</text><text x="761.500" y="502.500" textLength="60.500">Pelouses et pâturages</text><text x="761.500" y="510" textLength="23">naturels</text><text x="761.500" y="520.500" textLength="32">Plans d'eau</text><text x="761.500" y="531" textLength="21">Prairies</text><text x="761.500" y="541.500" textLength="24">Surfaces</text><text x="761.500" y="549" textLength="44">essentiellement</text><text x="761.500" y="556.500" textLength="65">agricoles, interrompues</text><text x="761.500" y="564" textLength="44">par des espaces</text><text x="761.500" y="571.500" textLength="54">naturels importants</text><text x="761.500" y="582" textLength="61">Systèmes culturaux et</text><text x="761.500" y="589.500" textLength="62">parcellaires complexes</text><text x="761.500" y="600.500" textLength="52">Terres arables hors</text><text x="761.500" y="608" textLength="60">périmètres d'irrigation</text><text x="761.500" y="618.500" textLength="64">Tissu urbain discontinu</text><text x="761.500" y="629" textLength="61">Vergers et petits fruits</text><text x="761.500" y="639.500" textLength="27">Vignobles</text><text x="761.500" y="650.500" textLength="51">&lt;toutes les autres</text><text x="761.500" y="658" textLength="24">valeurs&gt;</text>
        </g>
        <path d="M698.500 239v514.500h739V239" fill="none" stroke="#8f8f8f" stroke-width="1.500"/>
        <path d="M649.500 463.500h180v214h-180z" fill="none" stroke="#333"/>
        <path d="M646 460.500h6v6h-6z" fill="#333" stroke="#333"/>
        <path d="M736.500 460.500h6v6h-6zM826.500 460.500h6v6h-6zM646 567.500h6v6h-6zM826.500 567.500h6v6h-6zM646 674.500h6v6h-6zM736.500 674.500h6v6h-6zM826.500 674.500h6v6h-6z" fill="#fff" stroke="#666" stroke-width="1.300"/>
        <path d="M1376 752h10" stroke="#e00" stroke-width="2" stroke-dasharray="2 2"/>
      </svg>
      <div class="vs"><svg width="9" height="9"><use href="#up"/></svg><b></b><svg width="9" height="9"><use href="#chev"/></svg></div>
      <div class="hs"><svg width="9" height="9" class="lf"><use href="#chev"/></svg><b></b><svg width="9" height="9" class="rt"><use href="#chev"/></svg></div>
    </div>
    <div class="vstat">
      <div class="scale">1:82 974<svg width="9" height="9"><use href="#chev"/></svg></div><hr>
      <div class="pct">47 %<svg width="9" height="9"><use href="#chev"/></svg></div><hr>
      <svg class="gridic" viewBox="0 0 20 20"><path d="M.5.500h19v19H.5z" fill="#94c5ea" stroke="#00619b"/><path d="M2.500 2.500h10v10h-10zM7.500 2.500v10M2.500 7.500h10" fill="none" stroke="#777"/><path d="M13.500 10v8M9.500 14h8" stroke="#444"/></svg><svg width="9" height="9" color="#222"><use href="#chev"/></svg><hr class="h3">
      <span class="xy">435,414 , -114,672</span>
      <span class="sel-n"><svg viewBox="0 0 16 16" width="15" height="15"><path d="M2.500 2.500h7v9h-7z" fill="#cfe8f8" stroke="#555"/><path d="M7.500 6.500h7v7h-7z" fill="#fff" stroke="#555"/></svg>Eléments sélectionnés : 1</span><hr>
      <svg class="pause" viewBox="0 0 10 12" width="10" height="12"><path d="M2 0v12M8 0v12" stroke="#555" stroke-width="2.500"/></svg><hr><svg class="rf" width="16" height="16"><use href="#refresh"/></svg>
    </div>
  </section>

  <section class="right">
    <div class="print">
      <div class="ph"><h2>Imprimer la mise en page</h2><svg width="9" height="9"><use href="#chev"/></svg><svg width="10" height="12"><use href="#pin"/></svg><svg width="11" height="11"><use href="#x"/></svg></div>
      <div class="sub">Mise en page</div>
      <div class="scroll">
        <div class="form">
          <h4><svg width="10" height="10"><use href="#chev"/></svg>Imprimante</h4>
          <label>Nom de l’imprimante</label>
          <div class="f prn"><div class="combo">Microsoft Print to PDF<svg width="9" height="9"><use href="#chev"/></svg></div><svg width="17" height="16"><use href="#refresh"/></svg></div>
          <div class="f st"><span>Statut</span><svg viewBox="0 0 12 12" width="12" height="12"><circle cx="6" cy="6" r="6" fill="#59a95c"/><path d="M3 6l2.200 2.500L9.200 3.800" fill="none" stroke="#fff" stroke-width="1.600"/></svg><em>Prêt</em><button>Propriétés</button></div>
          <h4 class="pap"><svg width="10" height="10"><use href="#chev"/></svg>Papier</h4>
          <div class="f t1"><span>Taille</span><div class="combo">A3<svg width="9" height="9"><use href="#chev"/></svg></div></div>
          <div class="f t2"><span>Source</span><div class="combo off"><svg width="9" height="9"><use href="#chev"/></svg></div></div>
          <div class="f t3"><span>Orientation</span>
            <div class="or po"><svg viewBox="0 0 22 28" width="22" height="28"><path d="M.6.600h15L21.400 6v21.400H.6z" fill="#fafafa" stroke="#777" stroke-width="1.200"/><path d="M1.500 1.500h14V8h-14z" fill="#cfe8f8"/><path d="M15.500.600V7h6z" fill="#fff" stroke="#777"/></svg>Portrait</div>
            <div class="or pa"><svg viewBox="0 0 28 22" width="28" height="22"><path d="M.6.600h21L27.400 6v15.400H.6z" fill="#fafafa" stroke="#777" stroke-width="1.200"/><path d="M1.500 1.500h20V8h-20z" fill="#cfe8f8"/><path d="M21.500.600V7h6z" fill="#fff" stroke="#777"/></svg>Paysage</div></div>
          <div class="f t4"><span>Nombre de copies</span><div class="spin">1<i><svg width="9" height="9"><use href="#up"/></svg><svg width="9" height="9"><use href="#chev"/></svg></i></div></div>
        </div>
        <div class="ps"><svg width="9" height="9"><use href="#up"/></svg><b></b><svg width="9" height="9"><use href="#chev"/></svg></div>
      </div>
      <div class="split"><i></i><i></i><i></i></div>
      <div class="til">Tuilage</div>
      <div class="thumb"><svg viewBox="0 0 648 456" preserveAspectRatio="none"><rect width="648" height="456" fill="#b5daf2"/><path d="M542 0C500 15 475 30 474 45C472 58 490 62 480 75C450 95 460 105 452 122C440 132 418 128 414 145C415 175 420 170 410 185C375 205 375 222 350 222C325 222 320 212 300 214C285 220 290 232 280 245C265 262 235 266 220 252C205 236 190 225 170 240C160 255 168 268 166 280C150 300 150 315 165 318C195 316 225 305 226 330C222 350 188 365 190 378C195 395 230 385 250 405C252 420 238 440 240 456H354L370 430L356 425C362 405 400 395 402 375C392 352 415 355 418 325C420 295 460 305 478 305C498 298 505 280 525 285C545 300 540 308 565 310C595 308 625 315 648 303V0Z" fill="#e7f5fe"/></svg></div>
      <div class="act"><big>Activer Windows</big><small>Accédez aux paramètres pour activer Windows.</small></div>
      <button class="go">Imprimer</button>
    </div>
    <div class="ptabs"><span><svg viewBox="0 0 16 16"><path d="M4 5v9h6M4 8h6" fill="none" stroke="#666"/><path d="M1 1h6v4H1z" fill="#3e97d3"/><path d="M9 5h7v5H9zM9 11h7v5H9z" fill="#d9c141"/></svg>Catalogue</span><span><svg viewBox="0 0 16 16"><path d="M3 1h11l1 10 1 4H0l3-5z" fill="#e5d048"/><path d="M12 6L7 12" stroke="#666" stroke-width="2"/><path d="M8 10l-5 5" stroke="#9b653a" stroke-width="2.500"/></svg>Symbologie</span><span><svg viewBox="0 0 16 16"><path d="M1 .500h12v15H1zM5.500 3h10v8H8l-2.500 3z" fill="#fff" stroke="#666"/><path d="M2 4h2M2 7h2M2 10h2M7 5.500h6M7 8h6" stroke="#3e97d3"/></svg>Elément</span><span class="on"><svg><use href="#printer"/></svg>Imprimer</span><svg class="pc" width="10" height="10"><use href="#chev"/></svg></div>
  </section>
  <aside class="dock"><div><svg viewBox="0 0 12 16" width="12" height="16"><path d="M0 0h10v16H0z" fill="#c8694b"/><path d="M6 1v14M4 6h3v4H4zM7 5h4.500v6H7z" fill="none" stroke="#fff"/></svg><span>Géotraitement</span></div><b></b></aside>
</main>

<footer class="win">
  <div class="start"><svg viewBox="0 0 18 17" width="18" height="17"><path d="M-1 2l8-1v7h-8zM8 1l10-1v8H8zM-1 9h8v7l-8-1zM8 9h10v8L8 16z" fill="#fff"/></svg></div>
  <div class="wsearch"><svg viewBox="0 0 18 18" width="17" height="17"><circle cx="11" cy="7" r="5.500" fill="none" stroke="#222" stroke-width="1.300"/><path d="M7 11l-6 6" stroke="#222" stroke-width="1.300"/></svg><span>Taper ici pour rechercher</span>
    <svg class="skate" viewBox="0 0 64 34" width="64" height="34"><path d="M10 3l9-2 5 19-3 7L2 28l1-8 7-5z" fill="#c9d1e8" stroke="#5d6698"/><path d="M16 3l6-1 1 20-5 2z" fill="#4a5178"/><path d="M0 31l27-8" stroke="#8a93b3" stroke-width="2"/><path d="M12 9l5 0M13 13l5 0M10 17l7 0" stroke="#445"/><path d="M41 2l6-1-2 31h-5zM49 1l5 1-5 31h-4z" fill="#7fa8dc" stroke="#5a7fb5"/><path d="M41 23h10" stroke="#f39a6b" stroke-width="5"/><path d="M30 4l4 28M62 5l-8 25M52 25l6 3M31 27l6-1" stroke="#8087a8" stroke-width="1.300"/><path d="M28 1l4 8M62 4l-2 7" stroke="#2c3155" stroke-width="3"/></svg></div>
  <div class="wi"><svg viewBox="0 0 18 18" width="18" height="18"><path d="M3 5h8v8H3zM1 1v2h11V1M1 17v-2h11v2M16 1v4M16 9v8" fill="none" stroke="#fff" stroke-width="1.200"/><path d="M15 6h3v2h-3z" fill="#fff"/></svg></div>
  <div class="wi"><svg viewBox="0 0 24 24" width="24" height="24"><circle cx="12" cy="12" r="12" fill="#1673c9"/><path d="M1 11C2 2 12-2 19 2c6 4 6 12 2 13-4 2-8 0-7-3 1-6-8-7-13-1z" fill="#42cf8d"/><path d="M12 8c-5 2-5 9 0 12 3 2 6 1 9-1-3 6-10 6-14 4C0 18 3 8 12 8z" fill="#0b4f9e"/><path d="M14 10c-3 3-1 7 4 7 3 0 5-1 5-3-2 2-9 1-9-4z" fill="#000"/></svg></div>
  <div class="wi run"><svg viewBox="0 0 22 20" width="22" height="20"><path d="M0 0h9l2 3h11v16H0z" fill="#f5b52a"/><path d="M0 5h22v14H0z" fill="#ffd868"/><path d="M4 20v-8h14v8h-4v-4H8v4z" fill="#3f97dc"/></svg></div>
  <div class="wi"><svg viewBox="0 0 24 24" width="24" height="24"><path d="M7 6V1h10v5" fill="none" stroke="#29b0ee" stroke-width="2"/><rect y="5" width="24" height="19" rx="3" fill="#f5f5f5"/><path d="M7 9h4.500v4.500H7z" fill="#f25022"/><path d="M12.500 9H17v4.500h-4.500z" fill="#7fba00"/><path d="M7 14.500h4.500V19H7z" fill="#00a4ef"/><path d="M12.500 14.500H17V19h-4.500z" fill="#ffb900"/></svg></div>
  <div class="wi"><svg viewBox="0 0 24 24" width="24" height="24"><path d="M5 6l8-6 11 7v15H5z" fill="#1368b8"/><path d="M9 13l15-4v13l-4 2H6z" fill="#2fc0f2"/><path d="M13 10l11 2-5 12z" fill="#1a92de"/><rect y="5" width="14" height="14" rx="1.500" fill="#0f6cbd"/><ellipse cx="7" cy="12" rx="3" ry="3.800" fill="none" stroke="#fff" stroke-width="1.800"/></svg></div>
  <div class="wi run cur"><svg viewBox="0 0 24 24" width="24" height="24"><path d="M12 0l11 6v12l-11 6-11-6V6z" fill="#0b70e0"/><circle cx="12" cy="12" r="7" fill="none" stroke="#fff" stroke-width="1.500"/><path d="M12 6l3 3-2 2 2 5-4 2-1-5-3-2 2-5z" fill="#fff"/></svg></div>
  <div class="wi run"><svg width="24" height="24"><use href="#wolf"/></svg></div>
  <div class="wi run"><svg viewBox="0 0 24 24" width="24" height="24"><path d="M7 2l15 2-4 18-16-3z" fill="#62b5c9"/><path d="M9 3l7 1-7 15-6-1z" fill="#a5dce6"/><path d="M22 4l1 15-5 3z" fill="#d9d0bd"/><path d="M2 19l15 3" stroke="#ccc" stroke-width="2"/></svg></div>
  <div class="wtray">
    <svg class="moon" viewBox="0 0 24 22" width="25" height="22"><path d="M14 1c9 3 10 13 4 18-6 4-13 2-16-4 9 1 14-6 12-14z" fill="#f7a83a"/><path d="M2 8a3 3 0 0 1 2-5c2-4 8-3 8 1 3 1 3 4 1 4z" fill="#9fbcf0"/><path d="M12 21a3 3 0 0 1 2-5c2-3 7-2 7 1 3 0 4 4 1 4z" fill="#b5c9f3"/></svg>
    <span class="deg">11°C</span><span class="cond">Parc. nublado</span>
    <svg class="a1" viewBox="0 0 12 8" width="12" height="8"><path d="M.5 7L6 1l5.500 6" fill="none" stroke="#fff" stroke-width="1.200"/></svg>
    <svg class="a2" viewBox="0 0 12 16" width="12" height="16"><path d="M1 4.500h7v7H1zM8 7l3-2v6L8 9M1 2Q5-1 9 2M1 14q4 3 8 0" fill="none" stroke="#fff" stroke-width="1.200"/></svg>
    <svg class="a3" viewBox="0 0 17 14" width="17" height="14"><path d="M5 2.500h11v8H4M9 10.500v3M6 13.500h7M.5.500h5v4h-5zM3 5v8" fill="none" stroke="#fff"/></svg>
    <svg class="a4" viewBox="0 0 17 14" width="17" height="14"><path d="M.5 5v4h2.500L7 12.500v-11L3 5zM9 5q1.500 2 0 4M11.500 3.500q2.500 3.500 0 7M14 2q3.500 5 0 10" fill="none" stroke="#fff"/></svg>
    <span class="clk">22:17<br>11/03/2025</span>
    <svg class="nt" viewBox="0 0 26 26" width="26" height="26"><path d="M1 2h16v12H8l-4 4v-4H1z" fill="#fff"/><path d="M4 5.500h10M4 8.500h10M4 11.500h6" stroke="#000"/><circle cx="17" cy="17" r="8" fill="#2b2b2b" stroke="#999" stroke-width=".7"/><text x="14" y="21.500" font-size="11" font-family="Open Sans" fill="#fff">3</text></svg>
  </div>
</footer>

<footer class="vmstat">
  <svg viewBox="0 0 14 16"><rect width="14" height="16" rx="1" fill="#2b86d9"/><circle cx="7" cy="7" r="5" fill="#d8efff"/><circle cx="7" cy="7" r="2" fill="#2b86d9"/><path d="M7 8q4 2 1 6H3" stroke="#fff" fill="none"/></svg>
  <svg viewBox="0 0 14 16"><path d="M0 6h4l4-4v12l-4-4H0z" fill="#67b9f2"/><path d="M9 1h5v14H9z" fill="#777"/></svg>
  <svg viewBox="0 0 14 16"><path d="M5 1h9v7H5z" fill="#1d5db5" stroke="#fff"/><path d="M.5 7.500h8v6h-8z" fill="#1d5db5" stroke="#fff"/></svg>
  <svg viewBox="0 0 14 16"><path d="M0 15l1-7 7-6 4 5-6 7z" fill="#5cc0f5"/><path d="M8 2l3-2 3 4-2 3z" fill="#eee"/></svg>
  <svg viewBox="0 0 14 16"><path d="M0 2h6l2-1h6v14H0z" fill="#6cc5f5"/></svg>
  <svg viewBox="0 0 14 16"><path d="M0 1h14v11H0z" fill="#fff"/><path d="M2 3h10v7H2z" fill="#1d5db5"/><path d="M4.500 5h5v3h-5z" fill="none" stroke="#fff"/><path d="M3 14h8" stroke="#fff" stroke-width="2"/></svg>
  <svg viewBox="0 0 14 16"><path d="M.5 5.500h10v9H.5z" fill="#2b66c9" stroke="#ddd"/><path d="M5 1h9v8H5z" fill="#8f9df0"/></svg>
  <svg viewBox="0 0 14 16"><rect width="9" height="15" fill="#5560d8"/><path d="M2 4l2.500 7L7 4" stroke="#fff" stroke-width="1.500" fill="none"/><path d="M11 0h3v16h-3z" fill="#000"/><path d="M11.500 3h2v12h-2z" fill="#ff4320"/></svg>
  <svg viewBox="0 0 14 16"><circle cx="7" cy="7" r="7" fill="#6cc0ee"/><path d="M4 6h5V3l5 5-5 6v-3l-4 2z" fill="#4fc43a"/></svg>
  <svg viewBox="0 0 14 16"><rect width="14" height="15" rx="1.500" fill="#5fbaf3"/><path d="M7 3v8M3.500 7L7 11l3.500-4z" stroke="#0b2350" stroke-width="2" fill="#0b2350"/></svg>
  <span>Right Ctrl</span><svg class="grip" viewBox="0 0 12 12"><path d="M2 11h10M5 8h7M8 5h4M10 2h2" stroke="#999" stroke-dasharray="1.500 1.500" stroke-width="1.500"/></svg>
</footer>

<footer class="host">
  <div class="apps">
    <div class="tux"><svg viewBox="0 0 36 40" width="38" height="40"><ellipse cx="18" cy="20" rx="17" ry="19" fill="#1c1c1c" stroke="#000" stroke-width="2"/><path d="M12 14q0-11 6-11t6 11c5 8 6 14 4 22H8c-2-8-1-14 4-22z" fill="#050505"/><path d="M12 22q6-8 12 0l2 15H10z" fill="#eee"/><circle cx="15.500" cy="11" r="2" fill="#fff"/><circle cx="20.500" cy="11" r="2" fill="#fff"/><path d="M14 15l4-2 4 2-4 4z" fill="#f5a91b"/></svg></div>
    <div><svg viewBox="0 0 36 36"><rect width="36" height="36" rx="3" fill="#0d2d55"/><path d="M6 31V6h6l6 13 6-13h6v25h-6V17l-6 12-6-12v14z" fill="#ffd40a"/></svg></div>
    <div><svg><use href="#wolf"/></svg></div>
    <div><svg viewBox="0 0 36 36"><circle cx="18" cy="18" r="18" fill="#7a16ad"/><path d="M18 14a4 4 0 0 1 0 8M18 8a10 10 0 0 1 0 20M18 3a15 15 0 0 1 0 30" fill="none" stroke="#eedcff" stroke-width="2.500"/></svg></div>
    <div><svg viewBox="0 0 36 36"><path d="M2 3h12l3 4h17v10H2z" fill="#c7375a"/><rect x="1" y="10" width="34" height="24" rx="2" fill="#a5a5a5"/><path d="M14 17h8" stroke="#fff" stroke-width="2"/></svg></div>
    <div><svg viewBox="0 0 36 36"><path d="M5 1h17l9 9v25H5z" fill="#1b7ec2"/><path d="M22 1l9 9h-9z" fill="#0d4f86"/><path d="M9 15h8M9 19h8M9 23h18M9 27h18M9 31h14" stroke="#fff" stroke-width="1.500"/><path d="M18 14h10v7H18z" fill="#cfe8f8"/></svg></div>
    <div class="cur"><svg viewBox="0 0 36 36"><path d="M0 2h9l2 7H8l4 18h4V17h8" fill="none" stroke="#087a94" stroke-width="3"/><path d="M1 4l7 28h9" fill="none" stroke="#087a94" stroke-width="3"/><path d="M25 5h8v8H22z" fill="none" stroke="#f18b12" stroke-width="4.500"/><path d="M35 20H23v6h11v7H19v-7" fill="none" stroke="#087a94" stroke-width="3.500"/></svg></div>
    <div><svg viewBox="0 0 36 36"><rect x="4" y="1" width="27" height="34" rx="3" fill="#eee"/><path d="M4 3q0-2 3-2h21q3 0 3 2v6H4z" fill="#3a7fe0"/><path d="M8 14h16M8 18h14M8 22h11M8 26h8" stroke="#aaa" stroke-width="1.500"/><path d="M10 30l2-6L30 6l4 4-18 18z" fill="#f7b928"/><path d="M30 6l3-2 3 4-2 2z" fill="#e4556c"/></svg></div>
    <div><svg viewBox="0 0 36 36"><path d="M4 8c4 2 8-2 11-4l3 4 5-7c8 6 13 17 7 26-7 9-22 8-26-2-2-6-1-12 0-17z" fill="#ff7139"/><path d="M20 9l3-7c9 8 13 15 6 27-1-8-3-14-9-20z" fill="#ffcb2f"/><circle cx="18" cy="20" r="8" fill="#7139c9"/><path d="M5 12q7-2 10 2l6 1-4 4-6 4q-6-4-6-11z" fill="#ff8f2e"/></svg></div>
    <div><svg viewBox="0 0 36 36"><rect x="4" y="1" width="28" height="34" rx="2" fill="#d0d0d0"/><path d="M7 2h22v5H7z" fill="#fff"/><path d="M4 8h28" stroke="#aaa"/><path d="M14 20l4-5 4 5M23 22l2 5-5 2M17 29h-5l-1-6" fill="none" stroke="#2f9a3f" stroke-width="2.500"/></svg></div>
    <div><svg viewBox="0 0 36 36"><circle cx="17" cy="18" r="13" fill="none" stroke="#7ca32b" stroke-width="8"/><path d="M20 20l14 14-3 1h-5L17 24z" fill="#97c13d"/><path d="M15 14l7 3 1 6-6-1z" fill="#f58220"/></svg></div>
    <div><svg viewBox="0 0 36 36"><path d="M24 1l10 5v24l-10 5L8 20l-5 4-3-2 5-5-5-5 3-2 5 4zM24 11l-9 7 9 7z" fill="#1e90dc" fill-rule="evenodd"/></svg></div>
    <div><svg viewBox="0 0 36 36"><path d="M5 1h17l9 9v25H5z" fill="#1b8e1a"/><path d="M22 1l9 9h-9z" fill="#0c5a0c"/><path d="M9 14h16v14H9zM9 18h16M9 22h16M14 14v14M19 14v14" fill="none" stroke="#fff" stroke-width="1.500"/><path d="M20 22h8v10h-8z" fill="#fff"/><path d="M22 31v-4M25 31v-7" stroke="#1b8e1a" stroke-width="2"/></svg></div>
    <div><svg viewBox="0 0 36 36"><rect x="1" y="4" width="34" height="28" rx="3" fill="#4b4b4b"/><path d="M6 9l4 3-4 3M12 16h5" fill="none" stroke="#ddd" stroke-width="1.500"/></svg></div>
    <div><svg viewBox="0 0 36 36"><rect x="1" y="4" width="34" height="28" rx="2" fill="#d9d9cf"/><path d="M1 26h34v4q0 2-2 2H3q-2 0-2-2z" fill="#b7b5a8"/><circle cx="17" cy="17" r="9" fill="#f8f8f8" stroke="#888" stroke-width="2"/><path d="M23 23l7 7" stroke="#555" stroke-width="3.500"/></svg></div>
    <div><svg viewBox="0 0 36 36"><path d="M30 3q-4-3-6 3l-5 8 4 3 5-6q4-3 2-8z" fill="#484848"/><path d="M20 14L11 26l-1 5 4-3 9-12z" fill="#6d78ff"/><path d="M7 27l-3 6q2 3 4 0z" fill="#38b4f3"/></svg></div>
  </div>
  <div class="lines"><i style="width:249px"></i><i style="width:275px"></i><i style="width:51px"></i><i style="width:108px"></i><i style="width:137px"></i></div>
  <div class="tray">
    <svg class="b1" viewBox="0 0 17 15" width="17" height="15"><rect width="17" height="15" rx="2" fill="#eee"/><path d="M1 9Q8 1 16 3M4 9q5-5 12-1M7 10l9 4M5 10q3 5 8 4" fill="none" stroke="#222" stroke-width="1.600"/></svg>
    <span class="b2">39<sup>°</sup>C</span>
    <svg class="b3" viewBox="0 0 14 14" width="14" height="14"><path d="M11 9.500A5 5 0 1 1 11 4" fill="none" stroke="#6fa3d6" stroke-width="3"/><path d="M13 0v7H7z" fill="#6fa3d6"/></svg>
    <svg class="b4" viewBox="0 0 16 16" width="16" height="16"><path d="M0 0h16v16H0z" fill="#000"/><path d="M3 7h10v8H3z" fill="#37a546"/><path d="M5 7V4q3-5 6 0v3" fill="none" stroke="#37a546" stroke-width="2"/></svg>
    <svg class="b5" viewBox="0 0 16 13" width="16" height="13"><path d="M1 4q7-6 14 0L8 12z" fill="none" stroke="#eee" stroke-width="1.300"/><path d="M4 6q4-2 8 0l-4 6z" fill="#eee"/></svg>
    <svg class="b6" viewBox="0 0 15 13" width="15" height="13"><path d="M0 4h3l5-4v13L3 9H0z" fill="#eee"/><path d="M10 4q2 2.500 0 5M12.500 3q3 3.500 0 7" fill="none" stroke="#888"/></svg>
    <svg class="b7" viewBox="0 0 14 14" width="14" height="14"><path d="M4 2.500A6 6 0 1 0 10 2.500M7 0v7" fill="none" stroke="#eee" stroke-width="1.200"/></svg>
    <span class="b8">03/11/25<br>22 : 17 PM</span>
  </div>
</footer>
<script src="script.js"></script>
</body>
</html>
```
FILE: styles.css
```css
* { box-sizing: border-box; }
body { margin: 0; width: 2546px; height: 1040px; overflow: hidden; display: flex; flex-direction: column; background: #eeeff1; font: 12px/15px "Open Sans", "Noto Sans", sans-serif; letter-spacing: -.42px; color: #444; }
svg { display: block; flex: none; }
.defs { position: absolute; }
h2, h3, h4 { margin: 0; font-weight: 400; }
.vm-menu { height: 20px; flex: none; background: #323232; color: #dcdcdc; font-size: 16px; line-height: 16px; letter-spacing: -.3px; display: grid; grid-template-columns: 38px 71px 48px 50px 66px 60px; border-bottom: 1px solid #241c1f; }
.vm-menu span { margin-left: -4px; }
.titlebar { height: 35px; flex: none; display: flex; align-items: center; }
.quick { width: 221px; display: grid; grid-template-columns: 30px 30px 30px 25px 18px 27px 29px 14px; margin-left: -4px; align-items: center; }
.proj { display: flex; align-items: center; gap: 4px; margin-left: 4px; font-size: 12.500px; width: 922px; letter-spacing: -.2px; }
.cmd { width: 213px; height: 24px; border: 1px solid #8c8d8f; border-radius: 3px; background: #f7f9f9; display: flex; align-items: center; padding: 0 5px 0 5px; gap: 8px; color: #777; white-space: nowrap; margin-right: 707px; }
.cmd i { flex: 1; }
.cmd { margin-left: -1px; }
.acct { display: flex; align-items: center; font-size: 12px; }
.who { width: 244px; letter-spacing: -.1px; white-space: nowrap; }
.av { width: 24px; height: 24px; border-radius: 50%; background: #cbf2e6; color: #1c6b5c; font-weight: 600; font-size: 10px; line-height: 24px; text-align: center; }
.bell { margin-left: 17px; }
.q { margin-left: 25px; font-size: 14px; width: 8px; }
.wmin { margin-left: 35px; } .wmax { margin-left: 34px; } .wx { margin-left: 34px; }
.tabs { height: 31px; flex: none; display: grid; grid-template-columns: 57px 101px 63px 66px 43px 72px 73px 58px 64px; padding: 1px 0 4px 5px; align-items: center; font-size: 13px; letter-spacing: -.1px; color: #333; line-height: 18px; }
.tabs b { font-weight: 400; color: #111; border-bottom: 2px solid #005a9e; padding-bottom: 2px; text-shadow: .3px 0 #111; }
.tabs em { font-style: normal; background: #fff; border: 1px solid #d4d5d8; border-radius: 5px; height: 26px; line-height: 24px; text-align: center; }
.ribbon { height: 102px; flex: none; margin-right: 8px; background: #fff; border-radius: 0 7px 7px 0; border-top: 1px solid #e2e3e5; box-shadow: 0 1px 3px #bbbec4; display: flex; color: #1b1b1b; }
.rg { display: flex; flex-direction: column; height: 91px; margin-top: 5px; border-right: 1px solid #d1d1d3; flex: none; }
.g1 { width: 155px; } .g2 { width: 68px; } .g3 { width: 230px; } .g4 { width: 297px; } .g5 { width: 305px; }
.btns { display: grid; height: 79px; padding-top: 2px; }
.g1 .btns { grid-template-columns: 57px 86px; } .g3 .btns { grid-template-columns: 66px 82px 82px; } .g4 .btns { grid-template-columns: 80px 50px 106px 44px; } .g5 .btns { grid-template-columns: 90px 92px 112px; padding-left: 6px; }
.rb { text-align: center; white-space: nowrap; }
.rb > svg { width: 31px; height: 32px; margin: 0 auto 4px; }
.rb svg.c { width: 9px; height: 9px; margin: 4px auto; }
.rb svg.c.in { display: inline-block; margin: 0; vertical-align: -1px; }
.lab { text-align: center; line-height: 14px; position: relative; top: 2px; }
.g1 .lab { padding-right: 20px; }
.launch { position: absolute; right: 6px; top: 1px; width: 9px; height: 9px; }
.collapse { margin: 82px 8px 0 auto; color: #111; }
main { flex: none; height: 741px; padding-top: 6px; display: flex; }
.contents { width: 312px; height: 729px; background: #f7f9f9; border: 1px solid #d3d5d9; border-left: 0; border-radius: 0 4px 0 0; margin-right: 7px; flex: none; }
.ph { display: flex; align-items: center; height: 31px; padding-right: 7px; }
.ph h2 { flex: 1; font-size: 15.500px; color: #222; letter-spacing: -.5px; line-height: 31px; }
.ph svg:nth-of-type(2) { margin: 0 9px 3px 9px; }
.contents .ph { margin-left: -1px; }
.find { display: flex; align-items: center; height: 24px; }
.find div { margin-left: 7px; width: 290px; height: 24px; border: 1px solid #8f9192; background: #fff; display: flex; align-items: center; padding: 0 6px 0 6px; gap: 11px; }
.find i { flex: 1; }
.views { display: flex; padding: 9px 0 0 12px; gap: 8px; height: 40px; }
.views svg { width: 24px; height: 24px; }
.bar { width: 128px; margin-left: 8px; height: 2px; background: #dfe0e1; }
.bar b { display: block; width: 32px; height: 3px; background: #007ac2; }
h3 { padding: 13px 0 0 8px; font-size: 14px; line-height: 18px; letter-spacing: -.35px; height: 35px; }
.row { display: flex; align-items: center; height: 25px; white-space: nowrap; letter-spacing: -.37px; }
.row s { width: 16px; text-decoration: none; }
.ex { width: 8px; height: 8px; margin-left: 2px; }
.ck { width: 14px; height: 14px; margin-top: -3px; }
.lk { width: 15px; height: 15px; margin-left: 5px; margin-top: -2px; } .dim { opacity: .5; }
.ic { width: 16px; height: 16px; margin: 0 5px 0 2px; }
.l0 .ex { margin: 0 2px 0 -3px; } .l0 .ic { margin: 0 3px 0 5px; }
.l1 { padding-left: 12px; } .l2 { padding-left: 28px; letter-spacing: -.4px; } .l3 { padding-left: 26px; } .l3 .ic { margin-left: 3px; }
.l2 .ex { margin-left: 3px; }
.sel { background: linear-gradient(#007ac2, #007ac2) 26px 0/284px 1px no-repeat, linear-gradient(#007ac2, #007ac2) 26px 100%/284px 1px no-repeat, linear-gradient(90deg, #007ac2 1px, #c5daee 1px, #c5daee 283px, #007ac2 283px) 26px 0/284px 100% no-repeat; }
.strong { font-weight: 600; color: #333; }
.view { width: 1727px; flex: none; margin-right: 7px; display: flex; flex-direction: column; height: 729px; }
.vtabs { height: 25px; border-bottom: 3px solid #d0d2d6; display: flex; }
.vt { display: flex; align-items: center; gap: 5px; height: 23px; padding-left: 5px; width: 80px; padding-top: 2px; color: #333; white-space: nowrap; }
.vt.on { width: 123px; background: #d2d3d7; border-radius: 4px 4px 0 0; padding-left: 6px; color: #555; }
.cx { margin-left: 6px; }
.more { margin: 8px 4px 0 auto; }
.body { display: grid; grid-template-columns: 20px 1690px 17px; grid-template-rows: 20px 642px 17px; background: #f7f9f9; border-right: 1px solid #d3d5d9; }
.rh { grid-column: 2; width: 1690px; height: 20px; overflow: visible; }
.rv { grid-column: 1; grid-row: 2; width: 20px; height: 642px; overflow: visible; }
.canvas { grid-column: 2; grid-row: 2; width: 1690px; height: 642px; }
.vs { grid-column: 3; grid-row: 2; background: #ebebeb; display: flex; flex-direction: column; align-items: center; justify-content: space-between; padding: 6px 0 5px; color: #666; }
.vs b { width: 9px; height: 331px; border-radius: 5px; background: #b4b4b4; margin-bottom: -58px; }
.hs { grid-column: 2 / 4; grid-row: 3; background: #ebebeb; display: flex; align-items: center; padding: 0 21px 0 4px; color: #666; }
.hs b { width: 1152px; height: 9px; border-radius: 5px; background: #b4b4b4; margin: 0 auto 0 380px; }
.lf { transform: rotate(90deg); } .rt { transform: rotate(-90deg); }
.tah { font-family: "DejaVu Sans Condensed", "DejaVu Sans", sans-serif; fill: #000; letter-spacing: 0; }
.sm { font-size: 6.800px; fill: #111; } .hd { font-size: 10.500px; }
.vstat { height: 25px; background: #f7f9f9; border: 1px solid #d3d5d9; border-top: 0; display: flex; align-items: center; padding-left: 24px; white-space: nowrap; }
.vstat hr { width: 1px; height: 15px; border: 0; margin: 0; background: #999; }
.scale { width: 101px; height: 22px; border: 1px solid #b8babb; background: #fff; display: flex; align-items: center; justify-content: space-between; padding: 0 2px 0 5px; margin-right: 4px; color: #222; }
.pct { display: flex; align-items: center; background: #fff; width: 49px; height: 22px; justify-content: space-between; padding: 0 4px 0 3px; margin: 0 4px 0 9px; color: #222; }
.gridic { width: 20px; height: 20px; margin: 0 4px 0 3px; }
.vstat .h3 { margin-left: 7px; }
.xy { margin-left: 580px; width: 675px; letter-spacing: -.35px; }
.sel-n { display: flex; gap: 3px; width: 156px; }
.pause { margin: 0 10px; } .rf { margin-left: 6px; }
.right { width: 462px; flex: none; margin-right: 9px; }
.print { width: 462px; height: 710px; border: 1px solid #007ac2; border-radius: 4px 4px 0 0; background: #f9f9f9; position: relative; box-shadow: inset 0 0 0 .5px #007ac2; }
.print h2 { color: #007ac2; padding-left: 6px; letter-spacing: -.15px; font-size: 15px; }
.sub { text-align: center; font-size: 15px; line-height: 22px; letter-spacing: -.2px; }
.scroll { display: flex; height: 336px; margin-top: 13px; }
.form { width: 438px; padding: 16px 0 0 14px; letter-spacing: -.15px; }
h4 { display: flex; align-items: center; gap: 3px; margin-left: -5px; font-size: 13px; line-height: 18px; text-shadow: .4px 0 #444; }
label { display: block; line-height: 18px; margin: 11px 0 3px; }
.f { display: flex; align-items: center; }
.combo { height: 21px; border: 1px solid #b2b4b6; border-radius: 3px; background: #fff; display: flex; align-items: center; justify-content: space-between; padding: 0 4px; width: 334px; color: #333; }
.prn { gap: 6px; } .prn .combo { width: 390px; padding-left: 8px; text-shadow: .3px 0 #444; }
.st { height: 24px; margin-top: 11px; } .st span { width: 123px; } .st em { font-style: normal; margin-left: 6px; width: 192px; }
button { font: inherit; letter-spacing: -.1px; background: #fff; border: 1px solid #444; border-radius: 3px; color: #333; padding: 0; width: 75px; height: 24px; }
.st button { margin-left: 1px; }
.pap { margin-top: 24px; }
.t1 { margin-top: 11px; } .t1 span, .t2 span, .t3 span { width: 80px; } .t2 { margin-top: 10px; } .off { background: #eeeff1; justify-content: flex-end; }
.t3 { margin-top: 10px; height: 60px; } .off svg { color: #777; }
.or { border: 1px solid #a8a9ad; border-radius: 3px; display: flex; flex-direction: column; align-items: center; font-size: 10px; line-height: 14px; }
.po { width: 57px; height: 60px; padding-top: 9px; gap: 1px; margin-right: 10px; } .pa { width: 60px; height: 50px; padding-top: 7px; gap: 4px; background: #c2c3c7; border-color: #2f95cf; }
.t4 { margin-top: 10px; } .t4 span { width: 117px; } .spin { width: 45px; height: 21px; border: 1px solid #b2b4b6; background: #fff; display: flex; justify-content: space-between; align-items: center; padding: 0 4px; color: #111; } .spin svg { color: #666; }
.ps { width: 17px; background: #ebebeb; padding: 4px 0; display: flex; flex-direction: column; align-items: center; color: #666; }
.ps b { width: 9px; height: 181px; background: #b4b4b4; border-radius: 5px; margin: 6px 0 auto; }
.split { margin: 10px 4px 0; height: 9px; border: solid #c9c9c9; border-width: 2px 0; display: flex; justify-content: center; align-items: center; gap: 2px; }
.split i { width: 4px; height: 4px; border-radius: 2px; background: #c9c9c9; }
.til { padding-left: 4px; margin-top: 9px; line-height: 18px; letter-spacing: -.1px; }
.thumb { width: 230px; height: 162px; margin: 28px 0 0 115px; border: 1px solid #555; padding: 4px 6px; background: #fff; box-shadow: 0 1px 5px #aaa, inset 0 0 0 1px #eee, inset 0 0 0 3px #b5b6b8; }
.thumb svg { width: 216px; height: 152px; }
.act { margin: 8px 0 0 66px; color: #bcbcbc; display: flex; flex-direction: column; white-space: nowrap; }
.act big { font-size: 19px; line-height: 25px; letter-spacing: -.2px; } .act small { font-size: 15px; line-height: 21px; letter-spacing: -.37px; }
.go { position: absolute; right: 10px; bottom: 10px; width: 71px; }
.ptabs { display: flex; align-items: center; height: 20px; margin-top: -1px; padding-left: 5px; letter-spacing: -.27px; font-size: 12px; }
.ptabs span { display: flex; align-items: center; gap: 4px; height: 20px; } .ptabs span svg { width: 17px; height: 16px; }
.ptabs span:nth-child(1) { width: 88px; } .ptabs span:nth-child(2) { width: 97px; } .ptabs span:nth-child(3) { width: 69px; }
.ptabs .on { width: 82px; height: 21px; background: #f9f9f9; border: 1px solid #007ac2; border-top: 0; border-radius: 0 0 4px 4px; padding-left: 5px; color: #006bb5; position: relative; }
.pc { margin: 3px 5px 0 auto; }
.dock { flex: 1; display: flex; } .dock div { width: 16px; } .dock span { writing-mode: vertical-rl; line-height: 14px; margin-top: 5px; letter-spacing: -.35px; } .dock b { width: 7px; height: 96px; background: #bdbec1; margin-left: auto; }
.win { height: 40px; flex: none; background: linear-gradient(#000 8px, transparent 8px), linear-gradient(90deg, #000 0, #060803 800px, #141503 870px, #2a2a06 960px, #290a02 1080px, #200002 1150px, #1c0002 1500px, #1c0002 2030px, #0b0605 2060px, #060604 2546px); display: flex; }
.start { width: 34px; padding: 11px 0 0 0; }
.wsearch { width: 288px; height: 40px; background: #f2f2f2; border: 1px solid #b8b8b8; display: flex; align-items: center; padding-left: 11px; color: #333; font-size: 14px; letter-spacing: -.12px; gap: 12px; white-space: nowrap; }
.wsearch span { width: 166px; }
.wi { width: 49.300px; display: flex; align-items: center; justify-content: center; }
.wi.run { background: linear-gradient(#76b9ed, #76b9ed) 50% 100%/40px 2px no-repeat; }
.wi.cur { background: linear-gradient(#76b9ed, #76b9ed) 0 100%/49px 2px no-repeat, #383838; }
.wtray { margin-left: auto; width: 389px; display: flex; align-items: center; color: #fff; white-space: nowrap; font-size: 14px; }
.deg { margin-left: 8px; width: 37px; font-size: 13.500px; letter-spacing: -.4px; } .cond { width: 106px; font-size: 13.500px; letter-spacing: -.1px; }
.a2 { margin-left: 12px; } .a3 { margin-left: 10px; } .a4 { margin-left: 7px; }
.clk { width: 78px; text-align: center; font-size: 12px; line-height: 18px; letter-spacing: -.3px; } .nt { margin-left: 8px; margin-top: 4px; }
.vmstat { height: 23px; flex: none; background: #323232; display: flex; align-items: center; justify-content: flex-end; gap: 5.200px; color: #dcdcdc; font-size: 16px; letter-spacing: -.15px; padding-right: 1px; }
.vmstat svg { width: 14px; height: 15px; } .vmstat span { width: 70px; white-space: nowrap; margin-left: -1px; margin-right: 1px; } .vmstat .grip { width: 11px; height: 12px; margin-top: 9px; }
.host { flex: 1; background: #121212; position: relative; }
.apps { display: flex; padding-left: 815px; height: 46px; } .apps div { width: 56px; height: 45px; display: flex; align-items: center; justify-content: center; padding-top: 2px; } .apps svg { width: 36px; height: 36px; }
.apps .tux { width: 62px; margin-right: 4px; background: #4d4d4d; border-radius: 22px; height: 42px; margin-top: 3px; padding: 0; } .apps .tux svg { width: 42px; height: 40px; } .apps .cur { background: #454545; }
.lines { position: absolute; left: 881px; bottom: 0; display: flex; gap: 5px; height: 3px; } .lines i { background: #eee; }
.tray { position: absolute; left: 2204px; top: 0; height: 47px; display: flex; align-items: center; color: #e4e4e4; width: 342px; font-size: 16px; letter-spacing: 0; }
.b2 { margin-left: 11px; width: 46px; letter-spacing: -.5px; } .b2 sup { font-size: 12px; line-height: 0; vertical-align: 4px; } .b4 { margin-left: 13px; } .b5 { margin-left: 16px; } .b6 { margin-left: 21px; } .b7 { margin-left: 21px; } .b8 { margin-left: 28px; width: 72px; text-align: center; font-size: 13.500px; line-height: 17px; white-space: nowrap; }
```
FILE: script.js
```js
// Draws the page rulers: 88.03 px for every 50 mm, origin at the page corner.
const NS = 'http://www.w3.org/2000/svg';
const STEP = 8.803, OX = 634.1, OY = 765.6;
function add(p, tag, attrs, text) {
  const e = document.createElementNS(NS, tag);
  for (const k in attrs) e.setAttribute(k, attrs[k]);
  if (text) e.textContent = text;
  p.appendChild(e);
}
const rh = document.getElementById('rh'), rv = document.getElementById('rv');
add(rh, 'path', { d: 'M339.500 219.500h1689v19h-1689z', fill: '#f8faf9', stroke: '#444' });
add(rv, 'path', { d: 'M319.500 239.500h19v641h-19z', fill: '#f8faf9', stroke: '#444' });
let dh = '', dv = '';
for (let i = -33; i < 159; i++) {
  const x = Math.floor(OX + i * STEP) + .5, big = i % 10 === 0;
  if (x > 340 && x < 2028) dh += `M${x} ${big ? 219 : 231}V239`;
  if (big && x < 2000 && x > 340) add(rh, 'text', { x: x + 3.500, y: 230, 'font-size': 12, fill: '#666' }, String(i * 5));
}
add(rh, 'text', { x: 640, y: 230, 'font-size': 12, fill: '#666' }, '0');
for (let i = -13; i < 60; i++) {
  const y = Math.floor(OY - i * STEP) + .5, big = i % 10 === 0;
  if (y > 241 && y < 880) dv += `M${big ? 319 : 330} ${y}H339`;
  if (big && y > 250 && y < 880) add(rv, 'text', { transform: `translate(328.500 ${y - 4}) rotate(-90)`, 'font-size': 12, fill: '#666' }, String(i * 5));
}
add(rh, 'path', { d: dh, stroke: '#444', fill: 'none' });
add(rv, 'path', { d: dv, stroke: '#444', fill: 'none' });
```
